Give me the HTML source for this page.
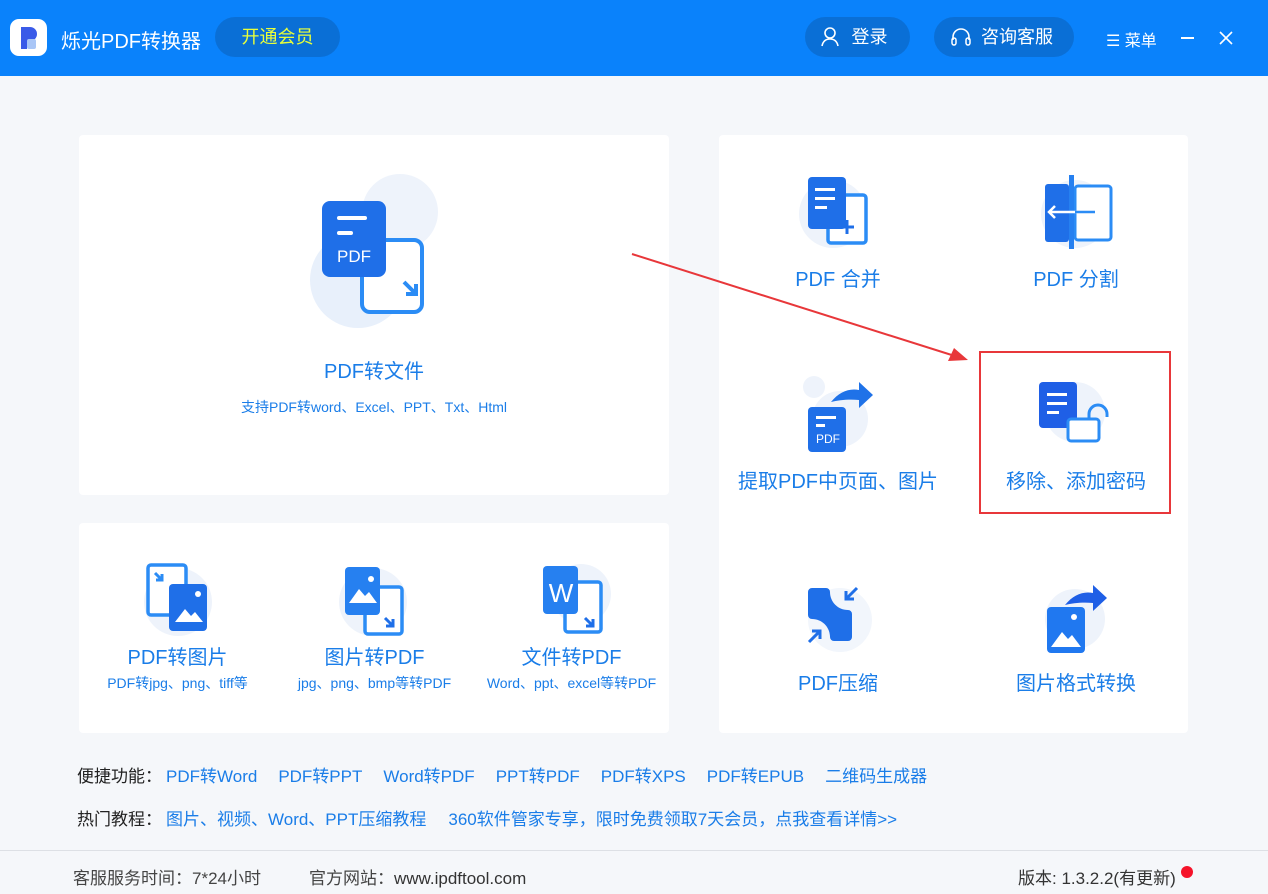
<!DOCTYPE html>
<html><head><meta charset="utf-8"><style>
*{margin:0;padding:0;box-sizing:border-box}
body{width:1268px;height:894px;background:#f5f7fa;font-family:"Liberation Sans","Noto Sans CJK SC",sans-serif;position:relative;overflow:hidden}
.a{position:absolute}
.hdr{left:0;top:0;width:1268px;height:76px;background:#0a82fb}
.pill{position:absolute;top:17px;height:40px;border-radius:20px;background:#0a6fd6;color:#fff;font-size:18px;line-height:40px;text-align:center}
.card{position:absolute;background:#fff;border-radius:4px}
.t{position:absolute;text-align:center;color:#1a7de8;white-space:nowrap}
.bl{color:#1a7de8}
svg{position:absolute;overflow:visible}
</style></head><body>
<div class="a hdr"></div>
<div class="a" style="left:10px;top:19px;width:37px;height:37px;background:#fff;border-radius:9px"></div>
<svg style="left:10px;top:19px" width="37" height="37"><path d="M11 8h9a7 7 0 0 1 0 14h-3v8h-6z" fill="#3a5be8"/><rect x="17" y="20" width="9" height="10" rx="2" fill="#a9c6f6"/></svg>
<div class="a" style="left:61px;top:25px;color:#fff;font-size:20px">烁光PDF转换器</div>
<div class="pill" style="left:215px;width:125px;color:#e8ff3a">开通会员</div>
<div class="pill" style="left:805px;width:105px"><span style="padding-left:24px">登录</span></div>
<svg style="left:820px;top:27px" width="20" height="20"><circle cx="10" cy="6" r="5" fill="none" stroke="#fff" stroke-width="1.6"/><path d="M2 19c1-5 4-7 8-7s7 2 8 7" fill="none" stroke="#fff" stroke-width="1.6"/></svg>
<div class="pill" style="left:934px;width:140px"><span style="padding-left:26px">咨询客服</span></div>
<svg style="left:950px;top:27px" width="22" height="20"><path d="M3 13v-3a8 8 0 0 1 16 0v3" fill="none" stroke="#fff" stroke-width="1.6"/><rect x="2" y="11" width="4" height="7" rx="2" fill="none" stroke="#fff" stroke-width="1.5"/><rect x="16" y="11" width="4" height="7" rx="2" fill="none" stroke="#fff" stroke-width="1.5"/></svg>
<div class="a" style="left:1106px;top:27px;color:#fff;font-size:16px">☰ 菜单</div>
<div class="a" style="left:1181px;top:37px;width:13px;height:1.5px;background:#fff"></div>
<svg style="left:1219px;top:31px" width="14" height="14"><path d="M1 1l12 12M13 1L1 13" stroke="#fff" stroke-width="1.6"/></svg>

<div class="card" style="left:79px;top:135px;width:590px;height:360px"></div>
<div class="card" style="left:79px;top:523px;width:590px;height:210px"></div>
<div class="card" style="left:719px;top:135px;width:469px;height:598px"></div>

<svg style="left:300px;top:180px" width="150" height="160"><circle cx="100" cy="32" r="38" fill="#eef3fb"/><circle cx="58" cy="100" r="48" fill="#e8f0fb"/><rect x="62" y="60" width="60" height="72" rx="8" fill="#fff" stroke="#2b8cf5" stroke-width="4"/><path d="M104 102l12 12M116 104v10h-10" fill="none" stroke="#2b8cf5" stroke-width="4"/><rect x="22" y="21" width="64" height="76" rx="8" fill="#1f6fe8"/><rect x="37" y="36" width="30" height="4" rx="2" fill="#fff"/><rect x="37" y="51" width="16" height="4" rx="2" fill="#fff"/><text x="54" y="82" font-size="17" fill="#fff" text-anchor="middle" font-family="Liberation Sans">PDF</text></svg>
<div class="t" style="left:79px;width:590px;top:355px;font-size:20px">PDF转文件</div>
<div class="t" style="left:79px;width:590px;top:397px;font-size:14px">支持PDF转word、Excel、PPT、Txt、Html</div>

<svg style="left:140px;top:560px" width="80" height="80"><circle cx="38" cy="42" r="34" fill="#eef3fb"/><rect x="8" y="5" width="38" height="50" rx="3" fill="#fff" stroke="#2b8cf5" stroke-width="3.5"/><path d="M15 13l7 7M22 14v6h-6" fill="none" stroke="#2b8cf5" stroke-width="3"/><rect x="29" y="24" width="38" height="47" rx="4" fill="#1f6fe8"/><path d="M35 62l10-13 6 7 4-4 8 10z" fill="#fff"/><circle cx="58" cy="34" r="3" fill="#fff"/></svg>
<div class="t" style="left:79px;width:197px;top:641px;font-size:20px">PDF转图片</div>
<div class="t" style="left:79px;width:197px;top:673px;font-size:14px">PDF转jpg、png、tiff等</div>

<svg style="left:335px;top:560px" width="80" height="80"><circle cx="38" cy="42" r="34" fill="#eef3fb"/><rect x="30" y="27" width="37" height="47" rx="3" fill="#fff" stroke="#2b8cf5" stroke-width="3.5"/><path d="M50 58l8 8M58 59v7h-7" fill="none" stroke="#1f6fe8" stroke-width="3"/><rect x="10" y="7" width="35" height="48" rx="4" fill="#2680f0"/><path d="M14 43l10-14 6 7 4-4 8 11z" fill="#fff"/><circle cx="36" cy="19" r="3" fill="#fff"/></svg>
<div class="t" style="left:276px;width:197px;top:641px;font-size:20px">图片转PDF</div>
<div class="t" style="left:276px;width:197px;top:673px;font-size:14px">jpg、png、bmp等转PDF</div>

<svg style="left:535px;top:560px" width="80" height="80"><circle cx="46" cy="34" r="30" fill="#eef3fb"/><rect x="30" y="22" width="36" height="50" rx="3" fill="#fff" stroke="#2b8cf5" stroke-width="3.5"/><path d="M50 58l8 8M58 59v7h-7" fill="none" stroke="#1f6fe8" stroke-width="3"/><rect x="8" y="6" width="35" height="48" rx="4" fill="#2680f0"/><text x="26" y="42" font-size="26" fill="#fff" text-anchor="middle" font-family="Liberation Sans">W</text></svg>
<div class="t" style="left:473px;width:197px;top:641px;font-size:20px">文件转PDF</div>
<div class="t" style="left:473px;width:197px;top:673px;font-size:14px">Word、ppt、excel等转PDF</div>

<svg style="left:795px;top:172px" width="80" height="80"><circle cx="38" cy="42" r="34" fill="#eef3fb"/><rect x="33" y="23" width="38" height="48" rx="3" fill="#fff" stroke="#2b8cf5" stroke-width="3.5"/><path d="M52 48v14M45 55h14" stroke="#1f6fe8" stroke-width="3"/><rect x="13" y="5" width="38" height="52" rx="4" fill="#1f6fe8"/><rect x="20" y="16" width="20" height="3" fill="#fff"/><rect x="20" y="25" width="20" height="3" fill="#fff"/><rect x="20" y="34" width="12" height="3" fill="#fff"/></svg>
<div class="t" style="left:719px;width:238px;top:263px;font-size:20px">PDF 合并</div>

<svg style="left:1035px;top:172px" width="80" height="80"><circle cx="40" cy="42" r="34" fill="#eef3fb"/><rect x="10" y="12" width="24" height="58" rx="3" fill="#1f6fe8"/><rect x="40" y="14" width="36" height="54" rx="3" fill="#fff" stroke="#2b8cf5" stroke-width="3"/><rect x="34" y="3" width="5" height="74" fill="#2680f0"/><path d="M14 40h46M20 34l-6 6 6 6M54 34l6 6-6 6" fill="none" stroke="#fff" stroke-width="2.5"/><path d="M40 40h20" stroke="#2b8cf5" stroke-width="2.5"/></svg>
<div class="t" style="left:957px;width:238px;top:263px;font-size:20px">PDF 分割</div>

<svg style="left:800px;top:372px" width="80" height="80"><circle cx="14" cy="15" r="11" fill="#eef3fb"/><circle cx="40" cy="47" r="28" fill="#eef3fb"/><path d="M31 30c8-10 18-14 28-12v-8l14 13-14 13v-8c-10-1-20 0-28 2z" fill="#1f72e8"/><rect x="8" y="35" width="38" height="45" rx="4" fill="#1f6fe8"/><rect x="16" y="44" width="20" height="3" fill="#fff"/><rect x="16" y="52" width="9" height="3" fill="#fff"/><text x="28" y="71" font-size="12" fill="#fff" text-anchor="middle" font-family="Liberation Sans">PDF</text></svg>
<div class="t" style="left:719px;width:238px;top:465px;font-size:20px">提取PDF中页面、图片</div>

<div class="a" style="left:979px;top:351px;width:192px;height:163px;border:2px solid #e8373a"></div>
<svg style="left:1035px;top:372px" width="80" height="80"><circle cx="40" cy="40" r="30" fill="#eef3fb"/><rect x="4" y="10" width="38" height="46" rx="4" fill="#1f5fe6"/><rect x="12" y="21" width="20" height="3" fill="#fff"/><rect x="12" y="30" width="20" height="3" fill="#fff"/><rect x="12" y="39" width="12" height="3" fill="#fff"/><rect x="33" y="47" width="31" height="22" rx="3" fill="#fff" stroke="#2b8cf5" stroke-width="3"/><path d="M54 47v-5a9 9 0 0 1 18 0v3" fill="none" stroke="#2b8cf5" stroke-width="3"/></svg>
<div class="t" style="left:957px;width:238px;top:465px;font-size:20px">移除、添加密码</div>

<svg style="left:800px;top:580px" width="80" height="80"><circle cx="40" cy="40" r="32" fill="#f2f6fc"/><path d="M8 12a4 4 0 0 1 4-4h14a4 4 0 0 1 4 4c0 10 8 18 18 18a4 4 0 0 1 4 4v23a4 4 0 0 1-4 4H34a4 4 0 0 1-4-4c0-10-8-18-18-18a4 4 0 0 1-4-4z" fill="#1f6fe8"/><path d="M57 8L46 19M46 11v8h8M9 62l11-11M20 59v-8h-8" fill="none" stroke="#1f6fe8" stroke-width="3"/></svg>
<div class="t" style="left:719px;width:238px;top:667px;font-size:20px">PDF压缩</div>

<svg style="left:1035px;top:575px" width="80" height="80"><circle cx="40" cy="44" r="30" fill="#eef3fb"/><path d="M30 30c8-10 18-14 28-12v-8l14 13-14 13v-8c-10-1-20 0-28 2z" fill="#1f5fe6"/><rect x="12" y="32" width="38" height="46" rx="4" fill="#2078f0"/><path d="M16 72l11-15 6 7 4-4 9 12z" fill="#fff"/><circle cx="39" cy="42" r="3" fill="#fff"/></svg>
<div class="t" style="left:957px;width:238px;top:667px;font-size:20px">图片格式转换</div>

<svg style="left:0;top:0" width="1268" height="894"><path d="M632 254L958 357" stroke="#e8373a" stroke-width="2"/><path d="M968 360l-20 1 6-13z" fill="#e8373a"/></svg>

<div class="a" style="left:77px;top:762px;font-size:17px;color:#222;white-space:nowrap">便捷功能：<span class="bl" style="margin-left:4px">PDF转Word</span><span class="bl" style="margin-left:21px">PDF转PPT</span><span class="bl" style="margin-left:21px">Word转PDF</span><span class="bl" style="margin-left:21px">PPT转PDF</span><span class="bl" style="margin-left:21px">PDF转XPS</span><span class="bl" style="margin-left:21px">PDF转EPUB</span><span class="bl" style="margin-left:21px">二维码生成器</span></div>
<div class="a" style="left:77px;top:805px;font-size:17px;color:#222;white-space:nowrap">热门教程：<span class="bl" style="margin-left:4px">图片、视频、Word、PPT压缩教程</span><span class="bl" style="margin-left:22px">360软件管家专享，限时免费领取7天会员，点我查看详情&gt;&gt;</span></div>
<div class="a" style="left:0;top:850px;width:1268px;height:1px;background:#dde0e5"></div>
<div class="a" style="left:73px;top:864px;font-size:17px;color:#444;white-space:nowrap">客服服务时间：7*24小时<span style="margin-left:48px">官方网站：</span><span style="color:#333">www.ipdftool.com</span></div>
<div class="a" style="left:1018px;top:864px;font-size:17px;color:#333;white-space:nowrap">版本: 1.3.2.2(有更新)</div>
<div class="a" style="left:1181px;top:866px;width:12px;height:12px;border-radius:6px;background:#f5132a"></div>
</body></html>
